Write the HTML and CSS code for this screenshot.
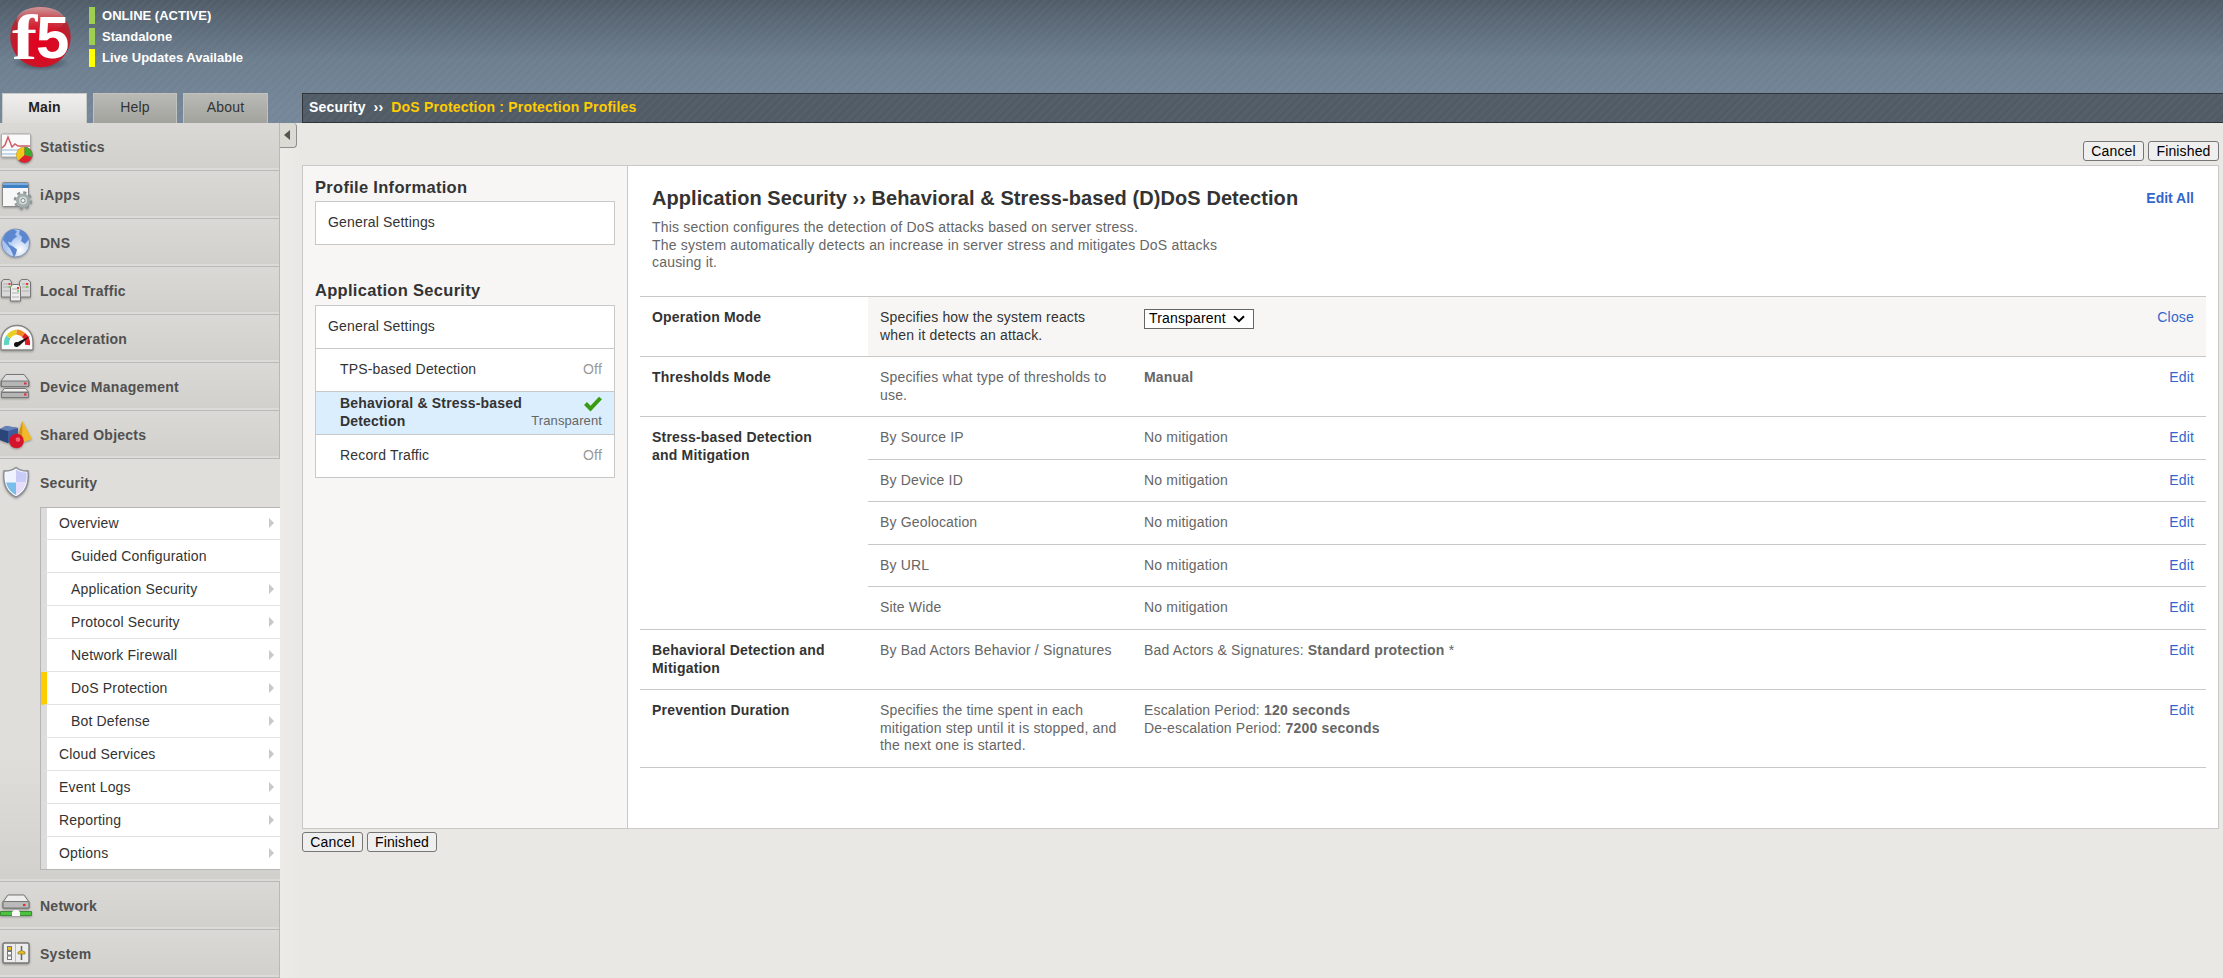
FILE: index.html
```html
<!DOCTYPE html>
<html lang="en">
<head>
<meta charset="utf-8">
<title>BIG-IP - Protection Profiles</title>
<link rel="stylesheet" href="styles.css">
</head>
<body>
<header class="banner">
  <div class="status">
    <svg class="logo" width="78" height="76" viewBox="0 0 78 76">
      <defs>
        <radialGradient id="ball" cx=".5" cy=".62" r=".6"><stop offset="0" stop-color="#e4001f"/><stop offset=".6" stop-color="#cf1226"/><stop offset="1" stop-color="#a3333b"/></radialGradient>
        <linearGradient id="gloss" x2="0" y2="1"><stop offset="0" stop-color="#e6c3c3" stop-opacity=".7"/><stop offset="1" stop-color="#d55" stop-opacity="0"/></linearGradient>
        <radialGradient id="shade"><stop offset="0" stop-color="#333c46" stop-opacity=".9"/><stop offset="1" stop-color="#333c46" stop-opacity="0"/></radialGradient>
      </defs>
      <ellipse cx="41" cy="63" rx="29" ry="8" fill="url(#shade)"/>
      <circle cx="40.500" cy="37" r="30.300" fill="url(#ball)"/>
      <ellipse cx="40.500" cy="20" rx="24" ry="13" fill="url(#gloss)"/>
      <text class="logo-f" transform="translate(12 59) scale(1.2 1)">f</text>
      <text class="logo-5" transform="translate(36 58) scale(1 1)">5</text>
    </svg>
    <ul class="status-list">
      <li class="ok">ONLINE (ACTIVE)</li>
      <li class="ok">Standalone</li>
      <li class="warn">Live Updates Available</li>
    </ul>
  </div>
  <div class="bar">
    <nav class="tabs"><a class="tab on">Main</a><a class="tab">Help</a><a class="tab">About</a></nav>
    <div class="crumbs"><span>Security</span><span class="sep">››</span><span class="here">DoS Protection : Protection Profiles</span></div>
  </div>
</header>
<div class="body">
  <aside class="side">
    <div class="mod"><svg class="ico" width="36" height="36" viewBox="0 0 36 36"><rect x="1.500" y="5" width="29" height="23" rx="1" fill="#fafafa" stroke="#aaa"/><path d="M2 21h28M2 25h28" stroke="#c3d9e8" stroke-width="2"/><path d="M2 19l3-3 3-8 4 10 3-3 3 2h12" fill="none" stroke="#cf5b63" stroke-width="1.500"/><circle cx="24.500" cy="26" r="8" fill="#e02030" stroke="#777" stroke-width=".6"/><path d="M24.500 26V18a8 8 0 0 0-6 13.500z" fill="#f2c71c"/><path d="M24.500 26V18a8 8 0 0 1 7.500 10z" fill="#3caa2c"/></svg>Statistics</div>
    <div class="mod"><svg class="ico" width="36" height="36" viewBox="0 0 36 36"><rect x="2.500" y="5.500" width="26" height="24" rx="1" fill="#f7f7f8" stroke="#888"/><path d="M3 6h25v5H3z" fill="#3f80c4"/><path d="M3 6h25v2H3z" fill="#79ade0"/><circle cx="23" cy="23.500" r="8" fill="none" stroke="#8c9696" stroke-width="2.600" stroke-dasharray="3.200 3.080"/><circle cx="23" cy="23.500" r="5.500" fill="#d4dada" stroke="#a3acac" stroke-width="3"/><circle cx="23" cy="23.500" r="2" fill="#f5f5f5" stroke="#7e8888"/></svg>iApps</div>
    <div class="mod"><svg class="ico" width="36" height="36" viewBox="0 0 36 36"><defs><radialGradient id="sea" cx=".65" cy=".75"><stop offset="0" stop-color="#fff"/><stop offset="1" stop-color="#a9c4ef"/></radialGradient></defs><circle cx="15.700" cy="18" r="14" fill="url(#sea)" stroke="#7d92b8"/><path d="M3 15C4 9 8 5 14 4.500l3 2-2 3 2 2-4 3-2 3-3-1 1 3 4 2 4 3-1 4-2 4-2-5-2-4-4-5zM20 5c5 1 8 5 9 9l-4 5-4-3 1-4-3-3z" fill="#5b87d0"/></svg>DNS</div>
    <div class="mod"><svg class="ico" width="36" height="36" viewBox="0 0 36 36"><g fill="#d9d9d9" stroke="#777"><path d="M1.500 9l2-2.500h6l2 2.500v15h-10zM19.500 9l2-2.500h6l3 2.500v15h-11z"/><path d="M10.500 14l2-2.500h6l2 2.500v14h-10z" fill="#eee"/></g><path d="M3 11h7M3 14h7M3 18h7M22 11h7M22 14h7M22 18h7M12 16h7M12 20h7M12 24h7" stroke="#b0b0b0"/><path d="M8.500 11h2M26 11h2M17 15h2" stroke="#e33" stroke-width="2"/><path d="M8.500 14h2M26 14h2M17 18h2" stroke="#6c4" stroke-width="1.500"/></svg>Local Traffic</div>
    <div class="mod"><svg class="ico" width="36" height="36" viewBox="0 0 36 36"><path d="M1 28V21C1 11 8 4.500 17 4.500S33 11 33 21v7q0 1-1 1H2q-1 0-1-1z" fill="#fafafa" stroke="#858585" stroke-width="1.400"/><g fill="none" stroke-width="5"><path d="M6.500 24a11 11 0 0 1 2-8" stroke="#5fd3c4"/><path d="M8.500 16a11 11 0 0 1 8-5" stroke="#e8cf22"/><path d="M16.500 11a11 11 0 0 1 7 3" stroke="#f08a20"/><path d="M23.500 14a11 11 0 0 1 4 10" stroke="#dd1c24"/></g><path d="M16 22L30 15 19 25z" fill="#111"/><circle cx="16.500" cy="23.500" r="2.500" fill="#111"/></svg>Acceleration</div>
    <div class="mod"><svg class="ico" width="36" height="36" viewBox="0 0 36 36"><path d="M1 12l5-6.500h18l5 6.500v5.500H1z" fill="#ddd" stroke="#777"/><path d="M1.500 12h27v5.500h-27zM1.500 23.500h27v5h-27z" fill="#b5b5b5" stroke="#777"/><path d="M1.500 23l3-3.500h21l3 3.500z" fill="#eee" stroke="#777"/><path d="M24 14.500h2.500M24 25.500h2.500" stroke="#e22b3b" stroke-width="2.200"/></svg>Device Management</div>
    <div class="mod"><svg class="ico" width="36" height="36" viewBox="0 0 36 36"><path d="M0 12l6-3 12 2v13l-10 2-8-3z" fill="#3e5c9a"/><path d="M0 12l8 2v12l-8-3z" fill="#2c4578"/><path d="M0 12l6-3 12 2-10 3z" fill="#6480b8"/><path d="M22.500 4L32 22l-8 3-7-3z" fill="#f2b92d"/><path d="M22.500 4l-5.500 18 5 2z" fill="#d19218"/><circle cx="16.500" cy="24" r="7.300" fill="#d4142c"/><circle cx="18" cy="22.500" r="2.300" fill="#f06478"/></svg>Shared Objects</div>
    <div class="mod open">
      <div class="mod-head"><svg class="ico" width="36" height="36" viewBox="0 0 36 36"><path d="M16 2.500q5 4 12 3.500 2 20-12 26Q2 26 4 6q7 .5 12-3.500z" fill="#fff" stroke="#8b8f99" stroke-width="1.500"/><path d="M16 4.500q-4 3-10.500 3-.5 6 .5 10h10z" fill="#eff3fd"/><path d="M16 4.500q4 3 10.500 3 .5 6-.5 10H16z" fill="#c9ccf6"/><path d="M6 17.500h10V30Q8 26 6 17.500z" fill="#79bde9"/><path d="M26 17.500H16V30q8-4 10-12.500z" fill="#e6ddfb"/></svg>Security</div>
      <ul class="sub">
        <li class="more">Overview</li>
        <li class="in">Guided Configuration</li>
        <li class="in more">Application Security</li>
        <li class="in more">Protocol Security</li>
        <li class="in more">Network Firewall</li>
        <li class="in more cur">DoS Protection</li>
        <li class="in more">Bot Defense</li>
        <li class="more">Cloud Services</li>
        <li class="more">Event Logs</li>
        <li class="more">Reporting</li>
        <li class="more">Options</li>
      </ul>
    </div>
    <div class="mod"><svg class="ico" width="36" height="36" viewBox="0 0 36 36"><path d="M3 14l5-7h16l5 7v6H3z" fill="#eee" stroke="#777"/><path d="M3 13.500h26v6.500H3z" fill="#bababa" stroke="#777"/><path d="M23 17h2.500" stroke="#e22b3b" stroke-width="2.200"/><path d="M.5 23.500h31v4H.5z" fill="#4cc33e" stroke="#3b8e35"/><path d="M12 28v-4l2-2h4l2 2v4z" fill="#fafafa"/></svg>Network</div>
    <div class="mod"><svg class="ico" width="36" height="36" viewBox="0 0 36 36"><rect x="3" y="7" width="26" height="20" rx="1.500" fill="#ececec" stroke="#777" stroke-width="1.500"/><path d="M15.500 8v18" stroke="#bbb"/><g fill="#fff" stroke="#777"><rect x="7.500" y="10.500" width="4" height="4" fill="#e5bd20"/><rect x="7.500" y="15.500" width="4" height="3.500"/><rect x="7.500" y="20" width="4" height="3.500"/></g><path d="M21.500 10v14" stroke="#666" stroke-width="1.500"/><path d="M18 16l3.500-1.500L25 16v2h-7z" fill="#e5bd20" stroke="#8b7a2a" stroke-width=".7"/></svg>System</div>
  </aside>
  <div class="gutter"><button class="fold" aria-label="Collapse menu"></button></div>
  <main class="main">
    <div class="actions top"><button class="btn">Cancel</button><button class="btn fin">Finished</button></div>
    <div class="panel">
      <section class="nav">
        <h3>Profile Information</h3>
        <ul class="box one"><li>General Settings</li></ul>
        <h3>Application Security</h3>
        <ul class="box">
          <li>General Settings</li>
          <li class="l2">TPS-based Detection<span class="off">Off</span></li>
          <li class="l2 sel"><b>Behavioral &amp; Stress-based Detection</b><span class="state"><svg width="18" height="16" viewBox="0 0 18 16"><path d="M1.500 7.500l5 5.200L16.500 2" fill="none" stroke="#389b10" stroke-width="4"/></svg>Transparent</span></li>
          <li class="l2">Record Traffic<span class="off">Off</span></li>
        </ul>
      </section>
      <section class="detail">
        <div class="title"><h2>Application Security ›› Behavioral &amp; Stress-based (D)DoS Detection</h2><a class="all">Edit All</a></div>
        <p class="intro">This section configures the detection of DoS attacks based on server stress.<br>The system automatically detects an increase in server stress and mitigates DoS attacks<br>causing it.</p>
        <div class="table">
          <div class="group two"><div class="name">Operation Mode</div><div class="rows"><div class="row active"><p>Specifies how the system reacts<br>when it detects an attack.</p><div><span class="select">Transparent<svg width="12" height="8" viewBox="0 0 12 8"><path d="M1 1.200l5 5 5-5" fill="none" stroke="#000" stroke-width="2"/></svg></span></div><a>Close</a></div></div></div>
          <div class="group two"><div class="name">Thresholds Mode</div><div class="rows"><div class="row"><p>Specifies what type of thresholds to<br>use.</p><div><b>Manual</b></div><a>Edit</a></div></div></div>
          <div class="group five"><div class="name">Stress-based Detection<br>and Mitigation</div><div class="rows">
            <div class="row"><p>By Source IP</p><div>No mitigation</div><a>Edit</a></div>
            <div class="row"><p>By Device ID</p><div>No mitigation</div><a>Edit</a></div>
            <div class="row"><p>By Geolocation</p><div>No mitigation</div><a>Edit</a></div>
            <div class="row"><p>By URL</p><div>No mitigation</div><a>Edit</a></div>
            <div class="row"><p>Site Wide</p><div>No mitigation</div><a>Edit</a></div></div></div>
          <div class="group two"><div class="name">Behavioral Detection and<br>Mitigation</div><div class="rows"><div class="row"><p>By Bad Actors Behavior / Signatures</p><div>Bad Actors &amp; Signatures: <b>Standard protection</b> *</div><a>Edit</a></div></div></div>
          <div class="group three"><div class="name">Prevention Duration</div><div class="rows"><div class="row"><p>Specifies the time spent in each<br>mitigation step until it is stopped, and<br>the next one is started.</p><div>Escalation Period: <b>120 seconds</b><br>De-escalation Period: <b>7200 seconds</b></div><a>Edit</a></div></div></div>
        </div>
      </section>
    </div>
    <div class="actions"><button class="btn">Cancel</button><button class="btn">Finished</button></div>
  </main>
</div>
</body>
</html>
```
FILE: styles.css
```css
* { box-sizing: border-box; }
body { margin: 0; height: 978px; overflow: hidden; background: #e9e8e4; color: #333; font: 14px/17.5px "Liberation Sans", Arial, sans-serif; letter-spacing: .17px; }
ul, p, h2, h3 { margin: 0; padding: 0; list-style: none; }
b { letter-spacing: .2px; }

.banner { height: 123px; display: flex; flex-direction: column; justify-content: space-between; background: repeating-linear-gradient(135deg, rgba(255,255,255,.025) 0 3px, transparent 3px 6px), linear-gradient(#505d69, #6d7e8f 60px, #748698 110px); }
.status { display: flex; height: 76px; }
.logo { flex: none; margin-right: 11px; }
.logo-f, .logo-5 { fill: #fff; font-weight: bold; letter-spacing: 0; }
.logo-f { font: bold 63px "Liberation Serif", serif; }
.logo-5 { font: bold 60px "Liberation Sans", sans-serif; }
.status-list { padding-top: 7px; color: #fff; font-weight: bold; font-size: 13px; letter-spacing: .02px; }
.status-list li { height: 17px; line-height: 17px; margin-bottom: 4px; padding-left: 7px; border-left: 6px solid #9fcf52; }
.status-list .warn { border-color: #ff0; height: 18px; }
.bar { display: flex; height: 30px; }
.tabs { display: flex; gap: 6px; width: 302px; padding-left: 2px; flex: none; }
.tab { width: 84px; height: 30px; border: 1px solid #c1c2be; border-bottom: 0; background: linear-gradient(#b9bab5, #a2a39d); text-align: center; line-height: 27px; font-size: 14px; letter-spacing: .2px; }
.tab.on { width: 85px; background: linear-gradient(#f0efee, #dddcd9); border-color: #c8c9c7; font-weight: bold; color: #222; }
.tab:last-child { width: 85px; }
.crumbs { flex: 1; border: 1px solid #303338; border-right: 0; padding-left: 6px; line-height: 27px; color: #fff; font-weight: bold; background: repeating-linear-gradient(135deg, rgba(255,255,255,.025) 0 3px, transparent 3px 6px), #505b66; }
.sep { margin: 0 8px; }
.here { color: #fc0; letter-spacing: .2px; }

.body { display: flex; height: 855px; }
.side { width: 280px; flex: none; }
.mod { height: 48px; padding-top: 2px; border-right: 1px solid #b9b9b9; border-bottom: 1px solid #b9b9b9; box-shadow: inset 0 -2px #dcdbd8; background: linear-gradient(#dad9d5, #d1d0cc); display: flex; align-items: center; color: #505050; font-weight: bold; letter-spacing: .26px; }
.ico { flex: none; margin: -2px 4px 0 0; filter: drop-shadow(0 1px 1px rgba(0,0,0,.3)); }
.mod.open { display: block; height: 423px; padding: 0; border-right: 0; background: linear-gradient(#dfdeda 70%, #d1d0cc); }
.mod-head { height: 48px; padding-top: 2px; display: flex; align-items: center; }
.sub { margin-left: 40px; width: 240px; border: 1px solid #b5b5b5; border-right: 0; background: #fff; color: #333; font-weight: normal; letter-spacing: .17px; }
.sub li { height: 33px; padding: 0 0 1px 12px; border-left: 6px solid #dcdcdc; border-bottom: 1px solid #e2e2e2; line-height: 30px; display: flex; justify-content: space-between; align-items: center; }
.sub li:first-child { height: 32px; }
.sub li:last-child { height: 32px; border-bottom: 0; }
.sub .in { padding-left: 24px; }
.sub .cur { border-left-color: #fc0; }
.sub .more::after { content: ""; border: 5px solid transparent; border-left-color: #c8c8c8; border-right: 0; margin-right: 6px; }

.gutter { width: 22px; flex: none; background: linear-gradient(90deg, #ecebe8, #e9e8e4); }
.fold { display: flex; align-items: center; justify-content: flex-start; width: 17px; height: 25px; padding: 0 0 0 4px; border: 1px solid #8f8f8f; border-top: 0; border-left: 0; border-radius: 0 4px 4px 0; background: #dcdbd3; }
.fold::before { content: ""; border: 5px solid transparent; border-right: 6px solid #555; border-left: 0; }
.main { flex: 1; padding-right: 4px; }
.actions { display: flex; gap: 4px; padding-top: 3px; }
.actions.top { height: 42px; padding-top: 18px; justify-content: flex-end; }
.btn { height: 20px; width: 61px; padding: 0; border: 1px solid #767676; border-radius: 3px; background: #efefef; color: #000; font: 14px/17px "Liberation Sans", Arial, sans-serif; letter-spacing: .15px; }
.btn + .btn { width: 70px; }
.btn + .fin { width: 71px; }
.panel { height: 664px; display: flex; border: 1px solid #c8c8c8; background: #fff; }
.nav { width: 325px; flex: none; padding: 11px 12px; border-right: 1px solid #c8c8c8; background: #f7f6f5; }
.nav h3 { height: 24px; font-size: 16.5px; line-height: 20px; letter-spacing: .3px; }
.box { border: 1px solid #c8c8c8; background: #fff; margin-bottom: 37px; }
.box.one { margin-bottom: 35px; }
.nav .one + h3 { height: 25px; }
.box li { height: 43px; padding: 0 12px; border-bottom: 1px solid #c8c8c8; line-height: 41px; display: flex; justify-content: space-between; }
.box li:last-child { border-bottom: 0; height: 42px; }
.box .l2 { padding-left: 24px; }
.off { color: #999; }
.box .sel { background: #dbeefe; line-height: 18px; }
.sel b { width: 190px; padding-top: 2px; letter-spacing: .18px; }
.state { display: flex; flex-direction: column; align-items: flex-end; padding-top: 4px; color: #666; font-size: 13px; letter-spacing: .1px; }
.detail { flex: 1; padding: 19px 12px 0; }
.title { display: flex; justify-content: space-between; padding: 0 12px 0 12px; height: 34px; }
h2 { font-size: 20px; line-height: 26px; letter-spacing: .075px; }
.all { font-weight: bold; color: #3366cc; line-height: 27px; letter-spacing: 0; }
.intro { padding-left: 12px; color: #666; height: 77px; letter-spacing: .19px; }
.table { border-top: 1px solid #c8c8c8; }
.group { display: flex; border-bottom: 1px solid #c8c8c8; }
.two { height: 60px; }
.three { height: 78px; }
.five { height: 213px; }
.name { width: 228px; flex: none; padding: 12px; font-weight: bold; letter-spacing: .2px; }
.rows { flex: 1; display: flex; flex-direction: column; }
.row { flex: 1; display: grid; grid-template-columns: 264px 1fr auto; padding: 12px 12px 0 12px; color: #666; }
.row + .row { border-top: 1px solid #c8c8c8; }
.row a { color: #3366cc; }
.active { background: #f7f6f5; color: #333; }
.select { display: inline-flex; align-items: center; gap: 7px; width: 110px; height: 20px; padding-left: 4px; border: 1px solid #666; background: #fff; color: #000; }
```
